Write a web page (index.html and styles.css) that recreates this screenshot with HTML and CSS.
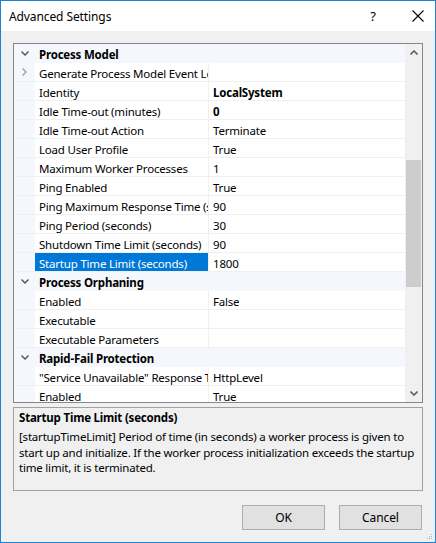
FILE: index.html
```html
<!DOCTYPE html>
<html>
<head>
<meta charset="utf-8">
<link rel="stylesheet" href="styles.css">
</head>
<body>
<div class="window">
  <div class="titlebar">
    <span class="title">Advanced Settings</span>
    <span class="help">?</span>
    <span class="close"><svg width="12" height="12" viewBox="0 0 12 12"><path d="M0.5 0.5 L11.5 11.5 M11.5 0.5 L0.5 11.5" stroke="#000" stroke-width="1.1" fill="none"/></svg></span>
  </div>
  <div class="content">
    <div class="grid">
      <div class="rows">
        <div class="row cat"><span class="gut"><svg class="chev" width="8" height="5" viewBox="0 0 8 5"><path d="M0.5 0.5 L4 4 L7.5 0.5" stroke="#505050" stroke-width="1.4" fill="none"/></svg></span><span class="name">Process Model</span></div>
        <div class="row"><span class="gut"><svg class="chev" width="5" height="8" viewBox="0 0 5 8"><path d="M0.5 0.5 L4 4 L0.5 7.5" stroke="#a0a0a0" stroke-width="1.4" fill="none"/></svg></span><span class="name">Generate Process Model Event Log Entry</span><span class="val"></span></div>
        <div class="row"><span class="gut"></span><span class="name">Identity</span><span class="val b">LocalSystem</span></div>
        <div class="row"><span class="gut"></span><span class="name">Idle Time-out (minutes)</span><span class="val b">0</span></div>
        <div class="row"><span class="gut"></span><span class="name">Idle Time-out Action</span><span class="val">Terminate</span></div>
        <div class="row"><span class="gut"></span><span class="name">Load User Profile</span><span class="val">True</span></div>
        <div class="row"><span class="gut"></span><span class="name">Maximum Worker Processes</span><span class="val">1</span></div>
        <div class="row"><span class="gut"></span><span class="name">Ping Enabled</span><span class="val">True</span></div>
        <div class="row"><span class="gut"></span><span class="name">Ping Maximum Response Time (seconds)</span><span class="val">90</span></div>
        <div class="row"><span class="gut"></span><span class="name">Ping Period (seconds)</span><span class="val">30</span></div>
        <div class="row"><span class="gut"></span><span class="name">Shutdown Time Limit (seconds)</span><span class="val">90</span></div>
        <div class="row"><span class="gut"></span><span class="name sel">Startup Time Limit (seconds)</span><span class="val">1800</span></div>
        <div class="row cat"><span class="gut"><svg class="chev" width="8" height="5" viewBox="0 0 8 5"><path d="M0.5 0.5 L4 4 L7.5 0.5" stroke="#505050" stroke-width="1.4" fill="none"/></svg></span><span class="name">Process Orphaning</span></div>
        <div class="row"><span class="gut"></span><span class="name">Enabled</span><span class="val">False</span></div>
        <div class="row"><span class="gut"></span><span class="name">Executable</span><span class="val"></span></div>
        <div class="row"><span class="gut"></span><span class="name">Executable Parameters</span><span class="val"></span></div>
        <div class="row cat"><span class="gut"><svg class="chev" width="8" height="5" viewBox="0 0 8 5"><path d="M0.5 0.5 L4 4 L7.5 0.5" stroke="#505050" stroke-width="1.4" fill="none"/></svg></span><span class="name">Rapid-Fail Protection</span></div>
        <div class="row"><span class="gut"></span><span class="name">"Service Unavailable" Response Type</span><span class="val">HttpLevel</span></div>
        <div class="row"><span class="gut"></span><span class="name">Enabled</span><span class="val">True</span></div>
      </div>
      <div class="scrollbar">
        <div class="sbtn"><svg width="8" height="5" viewBox="0 0 8 5"><path d="M0.5 4.5 L4 1 L7.5 4.5" stroke="#606060" stroke-width="1.6" fill="none"/></svg></div>
        <div class="track"><div class="thumb"></div></div>
        <div class="sbtn"><svg width="8" height="5" viewBox="0 0 8 5"><path d="M0.5 0.5 L4 4 L7.5 0.5" stroke="#606060" stroke-width="1.6" fill="none"/></svg></div>
      </div>
    </div>
    <div class="desc">
      <div class="dtitle">Startup Time Limit (seconds)</div>
      <div class="dtext">[startupTimeLimit] Period of time (in seconds) a worker process is given to start up and initialize. If the worker process initialization exceeds the startup time limit, it is terminated.</div>
    </div>
    <div class="buttons">
      <button class="btn">OK</button>
      <button class="btn">Cancel</button>
    </div>
    <div class="gripwrap"><svg class="grip" width="6" height="6" viewBox="0 0 6 6"><g fill="#b0b0b0"><rect x="4" y="0" width="1" height="1"/><rect x="2" y="2" width="1" height="1"/><rect x="4" y="2" width="1" height="1"/><rect x="0" y="4" width="1" height="1"/><rect x="2" y="4" width="1" height="1"/><rect x="4" y="4" width="1" height="1"/></g></svg></div>
  </div>
</div>
</body>
</html>
```
FILE: styles.css
```css
* { box-sizing: border-box; }
html, body { margin: 0; padding: 0; }
body { font-family: "Noto Sans", "Open Sans", sans-serif; font-size: 11.5px; letter-spacing: -0.2px; color: #000; }
.window {
  width: 436px; height: 543px;
  border: 1px solid #1883d7;
  background: #f0f0f0;
  display: flex; flex-direction: column;
}
.titlebar {
  height: 30px; background: #fff;
  display: flex; align-items: center;
  padding-left: 8px;
}
.title { flex: 1; font-size: 12px; letter-spacing: -0.1px; }
.help { width: 12px; margin-right: 33px; font-size: 13px; text-align: center; }
.close { width: 12px; height: 12px; margin-right: 11px; display: flex; }
.content { flex: 1; padding: 12px 12px 0 12px; display: flex; flex-direction: column; }
.grid {
  height: 360px;
  border: 1px solid #828790;
  background: #fff;
  display: flex;
}
.rows { flex: 1; overflow: hidden; display: flex; flex-direction: column; }
.row {
  height: 19px; flex: none;
  display: flex;
  border-bottom: 1px solid #f0f0f0;
  line-height: 17px;
}
.gut { width: 21px; flex: none; background: #f4f7fc; display: flex; align-items: center; justify-content: center; }
.name {
  width: 174px; flex: none; padding: 2px 0 0 4px;
  white-space: nowrap; overflow: hidden; text-overflow: clip;
  border-right: 1px solid #f0f0f0;
}
.name.sel { background: #0078d7; color: #fff; }
.val { flex: 1; padding: 2px 0 0 4px; white-space: nowrap; overflow: hidden; }
.b { font-weight: bold; }
.row.cat { background: #f4f7fc; border-bottom-color: #f4f7fc; font-weight: bold; }
.row.cat .name { border-right: none; width: auto; }
.scrollbar { width: 17px; flex: none; background: #f0f0f0; display: flex; flex-direction: column; }
.sbtn { height: 17px; flex: none; display: flex; align-items: center; justify-content: center; }
.track { flex: 1; padding-top: 99px; }
.thumb { margin: 0 1px; height: 127px; background: #cdcdcd; }
.desc {
  margin-top: 4px; height: 84px;
  border: 1px solid #a0a0a0;
  padding: 2px 5px;
}
.dtitle { font-weight: bold; line-height: 16px; margin-bottom: 3px; }
.dtext { line-height: 15.5px; }
.buttons { margin-top: 14px; display: flex; justify-content: flex-end; gap: 14px; padding-right: 1px; }
.btn {
  width: 83px; height: 25px;
  background: #e1e1e1; border: 1px solid #adadad;
  font-family: inherit; font-size: 12px; letter-spacing: -0.1px; color: #000;
  padding: 0;
}
.gripwrap { flex: 1; display: flex; justify-content: flex-end; align-items: flex-end; margin-right: -10px; padding-bottom: 2px; }
```
